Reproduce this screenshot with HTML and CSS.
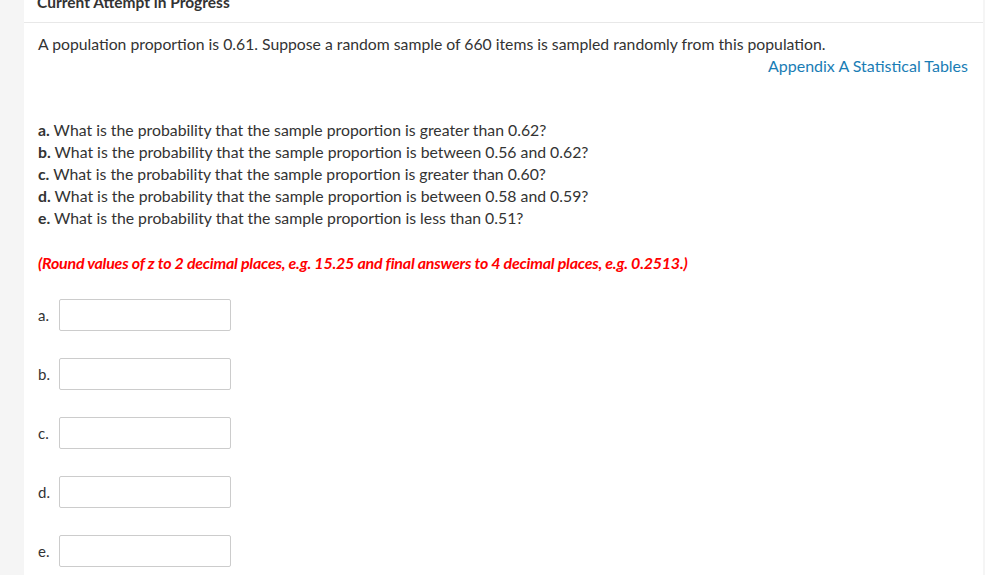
FILE: index.html
```html
<!DOCTYPE html>
<html>
<head>
<meta charset="utf-8">
<link rel="stylesheet" href="styles.css">
</head>
<body>
<div class="page">
  <div class="panel">
    <h2 class="title">Current Attempt in Progress</h2>
    <div class="content">
      <p class="intro">A population proportion is 0.61. Suppose a random sample of 660 items is sampled randomly from this population.</p>
      <div class="link-row"><a class="link" href="#">Appendix A Statistical Tables</a></div>
      <ol class="questions">
        <li><b>a.</b> What is the probability that the sample proportion is greater than 0.62?</li>
        <li><b>b.</b> What is the probability that the sample proportion is between 0.56 and 0.62?</li>
        <li><b>c.</b> What is the probability that the sample proportion is greater than 0.60?</li>
        <li><b>d.</b> What is the probability that the sample proportion is between 0.58 and 0.59?</li>
        <li><b>e.</b> What is the probability that the sample proportion is less than 0.51?</li>
      </ol>
      <p class="note">(Round values of z to 2 decimal places, e.g. 15.25 and final answers to 4 decimal places, e.g. 0.2513.)</p>
      <div class="answers">
        <div class="answer"><span class="label">a.</span><input class="box" type="text"></div>
        <div class="answer"><span class="label">b.</span><input class="box" type="text"></div>
        <div class="answer"><span class="label">c.</span><input class="box" type="text"></div>
        <div class="answer"><span class="label">d.</span><input class="box" type="text"></div>
        <div class="answer"><span class="label">e.</span><input class="box" type="text"></div>
      </div>
    </div>
  </div>
</div>
</body>
</html>
```

FILE: styles.css
```css
html {
  margin: 0;
  padding: 0;
  background: #f5f5f5;
  overflow: hidden;
}
body {
  margin: 0;
  padding: 0;
  font-family: Lato, "Liberation Sans", sans-serif;
  color: #333333;
}
.page {
  padding: 0 2px 0 24px;
}
.panel {
  display: flow-root;
  background: #ffffff;
  height: 600px;
}
.title {
  margin: -9px 0 0 0;
  padding: 0 0 0 13px;
  height: 32px;
  box-sizing: border-box;
  border-bottom: 1px solid #e8e8e8;
  font-size: 15.5px;
  font-weight: 700;
  line-height: 22px;
  color: #333333;
}
.content {
  padding: 10px 15px 0 14px;
}
.intro {
  margin: 0;
  font-size: 15.75px;
  line-height: 22px;
}
.link-row {
  text-align: right;
  line-height: 22px;
}
.link {
  font-size: 16px;
  color: #1a7db5;
  text-decoration: none;
}
.questions {
  list-style: none;
  margin: 42px 0 0 0;
  padding: 0;
  font-size: 15.8px;
  line-height: 22px;
}
.questions b {
  font-weight: 700;
}
.note {
  margin: 23px 0 0 0;
  font-size: 16px;
  line-height: 22px;
  font-style: italic;
  font-weight: 700;
  color: #ff0000;
  letter-spacing: -0.23px;
}
.answers {
  margin-top: 25px;
  display: flex;
  flex-direction: column;
  gap: 27px;
}
.answer {
  display: flex;
  align-items: center;
  gap: 8px;
}
.label {
  width: 13px;
  font-size: 15px;
}
.box {
  width: 172px;
  height: 32px;
  box-sizing: border-box;
  margin: 0;
  border: 1px solid #cccccc;
  border-radius: 2px;
  background: #fff;
  padding: 4px 6px;
}
```
